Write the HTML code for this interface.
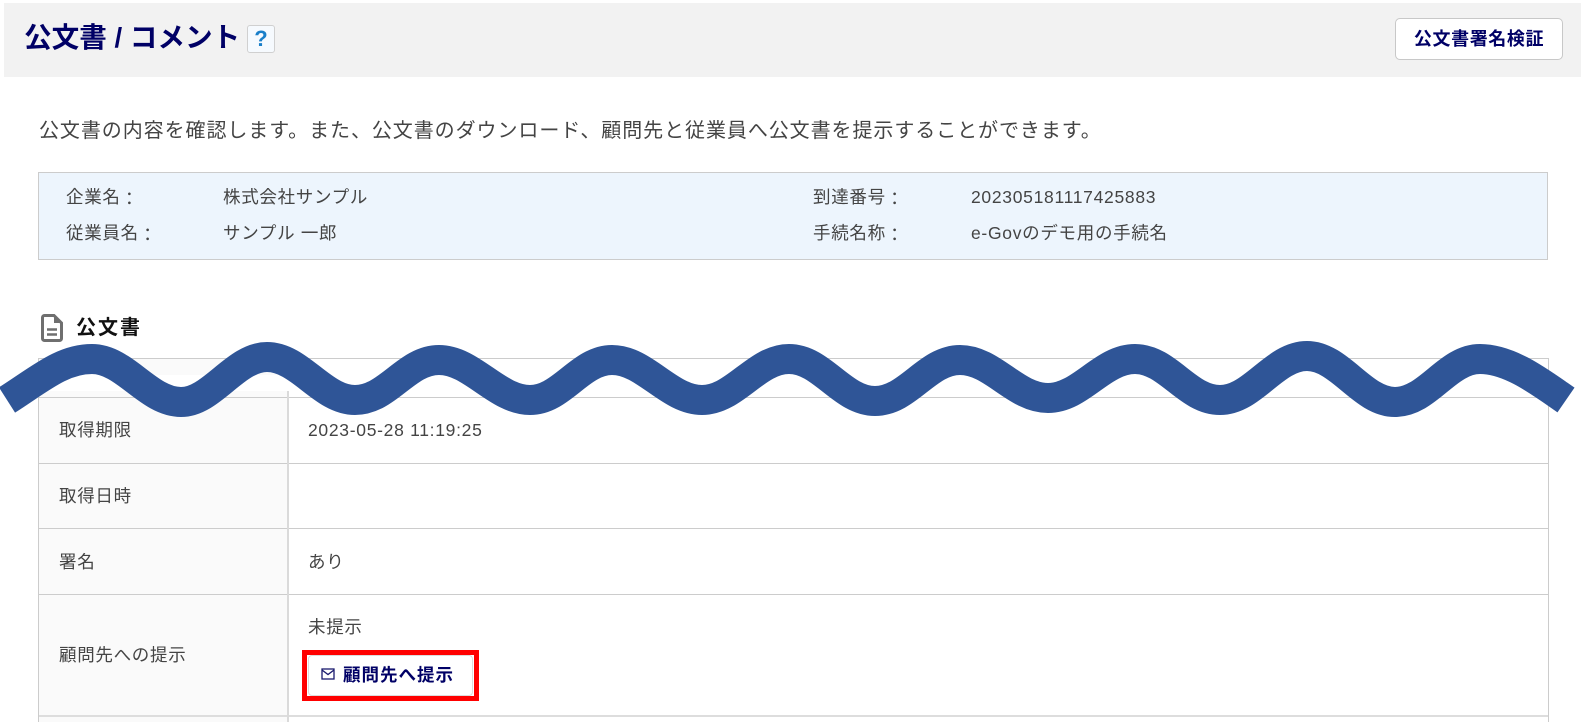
<!DOCTYPE html>
<html lang="ja"><head><meta charset="utf-8"><title>公文書 / コメント</title>
<style>
html,body{margin:0;padding:0;background:#fff}
body{width:1581px;height:722px;overflow:hidden;position:relative;font-family:"Liberation Sans","Noto Sans CJK JP",sans-serif;color:#444}
.a{position:absolute;white-space:nowrap}
.t{position:absolute;white-space:nowrap;line-height:24px;height:24px;font-size:17.5px;letter-spacing:.7px}
.t span{position:relative;top:2px}
.l{position:absolute;background:#ccc}
.navy{color:#000066;font-weight:bold}
</style></head><body>
<div class="a" style="left:4px;top:3px;width:1577px;height:74px;background:#f2f2f2"></div>
<div class="a navy" style="left:24px;top:19px;font-size:27.600px;line-height:38px">公文書 / コメント</div>
<div class="a" style="left:247px;top:25px;width:26px;height:26px;border:1px solid #d0d0d0;border-radius:3px;background:#f6fafe;color:#1a7fc9;font-weight:bold;font-size:22px;line-height:26px;text-align:center">?</div>
<div class="a navy" style="left:1395px;top:18px;width:166px;height:40px;border:1px solid #c8c8c8;border-radius:5px;background:#fff;font-size:18px;letter-spacing:.6px;line-height:40px;text-align:center">公文書署名検証</div>

<div class="a" style="left:39px;top:117px;font-size:20px;letter-spacing:.93px;line-height:28px">公文書の内容を確認します。また、公文書のダウンロード、顧問先と従業員へ公文書を提示することができます。</div>

<div class="a" style="left:38px;top:172px;width:1508px;height:86px;border:1px solid #ccc;background:#edf5fd"></div>
<div class="t" style="left:66px;top:185px">企業名<span>：</span></div>
<div class="t" style="left:223px;top:185px">株式会社サンプル</div>
<div class="t" style="left:66px;top:221px">従業員名<span>：</span></div>
<div class="t" style="left:223px;top:221px">サンプル 一郎</div>
<div class="t" style="left:813px;top:185px">到達番号<span>：</span></div>
<div class="t" style="left:971px;top:185px">202305181117425883</div>
<div class="t" style="left:813px;top:221px">手続名称<span>：</span></div>
<div class="t" style="left:971px;top:221px">e-Govのデモ用の手続名</div>

<svg class="a" style="left:40px;top:314px" width="24" height="28" viewBox="0 0 24 28"><path d="M2.500 3.500a2 2 0 0 1 2-2H14l7.500 7.500v15.500a2 2 0 0 1-2 2H4.500a2 2 0 0 1-2-2z" fill="#fff" stroke="#6f6f6f" stroke-width="3"/><path d="M14 1.500V9h7.500z" fill="#6f6f6f"/><path d="M7 15.500h10M7 20.500h10" stroke="#6f6f6f" stroke-width="2.400"/></svg>
<div class="a" style="left:76px;top:314px;font-size:20px;font-weight:bold;color:#111;letter-spacing:2px;line-height:28px">公文書</div>

<div class="a" style="left:39px;top:359px;width:248px;height:16px;background:#fafafa"></div>
<div class="a" style="left:39px;top:391px;width:248px;height:331px;background:#fafafa"></div>
<div class="l" style="left:38px;top:358px;width:1511px;height:1px"></div>
<div class="l" style="left:38px;top:397px;width:1511px;height:1px"></div>
<div class="l" style="left:38px;top:463px;width:1511px;height:1px"></div>
<div class="l" style="left:38px;top:528px;width:1511px;height:1px"></div>
<div class="l" style="left:38px;top:594px;width:1511px;height:1px"></div>
<div class="l" style="left:38px;top:715px;width:1511px;height:2px;background:#ddd"></div>
<div class="l" style="left:38px;top:358px;width:1px;height:364px"></div>
<div class="l" style="left:1548px;top:358px;width:1px;height:364px"></div>
<div class="l" style="left:287px;top:391px;width:2px;height:331px;background:#dadada"></div>

<div class="t" style="left:59px;top:418px">取得期限</div>
<div class="t" style="left:308px;top:418px">2023-05-28 11:19:25</div>
<div class="t" style="left:59px;top:484px">取得日時</div>
<div class="t" style="left:59px;top:550px">署名</div>
<div class="t" style="left:308px;top:550px">あり</div>
<div class="t" style="left:59px;top:643px">顧問先への提示</div>
<div class="t" style="left:308px;top:615px">未提示</div>

<div class="a" style="left:302px;top:650px;width:167px;height:41px;border:5px solid #f00;background:#fff"></div>
<div class="a" style="left:308px;top:655px;width:163px;height:39px;border:1px solid #dcdcdc;border-radius:4px;background:#fff"></div>
<svg class="a" style="left:321px;top:668px" width="14" height="12" viewBox="0 0 14 12"><rect x="1" y="1" width="12" height="10" fill="none" stroke="#1a1a6e" stroke-width="1.300"/><path d="M1 2l6 4.500L13 2" fill="none" stroke="#1a1a6e" stroke-width="1.300"/></svg>
<div class="a navy" style="left:343px;top:663px;font-size:17.500px;letter-spacing:1px;line-height:24px">顧問先へ提示</div>

<svg class="a" style="left:0;top:0" width="1581" height="722" viewBox="0 0 1581 722"><path d="M7 400C40 379 62 359 92 359C125 359 148 402 181 402C212 402 235 357 267 357C300 357 322 400 355 400C388 400 406 360 439 360C472 360 497 400 530 400C562 400 580 360 612 360C645 360 669 400 702 400C735 400 756 359 789 359C822 359 842 401 875 401C908 401 927 360 960 360C993 360 1015 398 1048 398C1081 398 1102 359 1135 359C1168 359 1187 400 1220 400C1253 400 1274 356 1307 356C1340 356 1362 402 1395 402C1428 402 1447 359 1480 359C1510 359 1540 382 1566 400" fill="none" stroke="#2f5597" stroke-width="30"/></svg>
</body></html>
